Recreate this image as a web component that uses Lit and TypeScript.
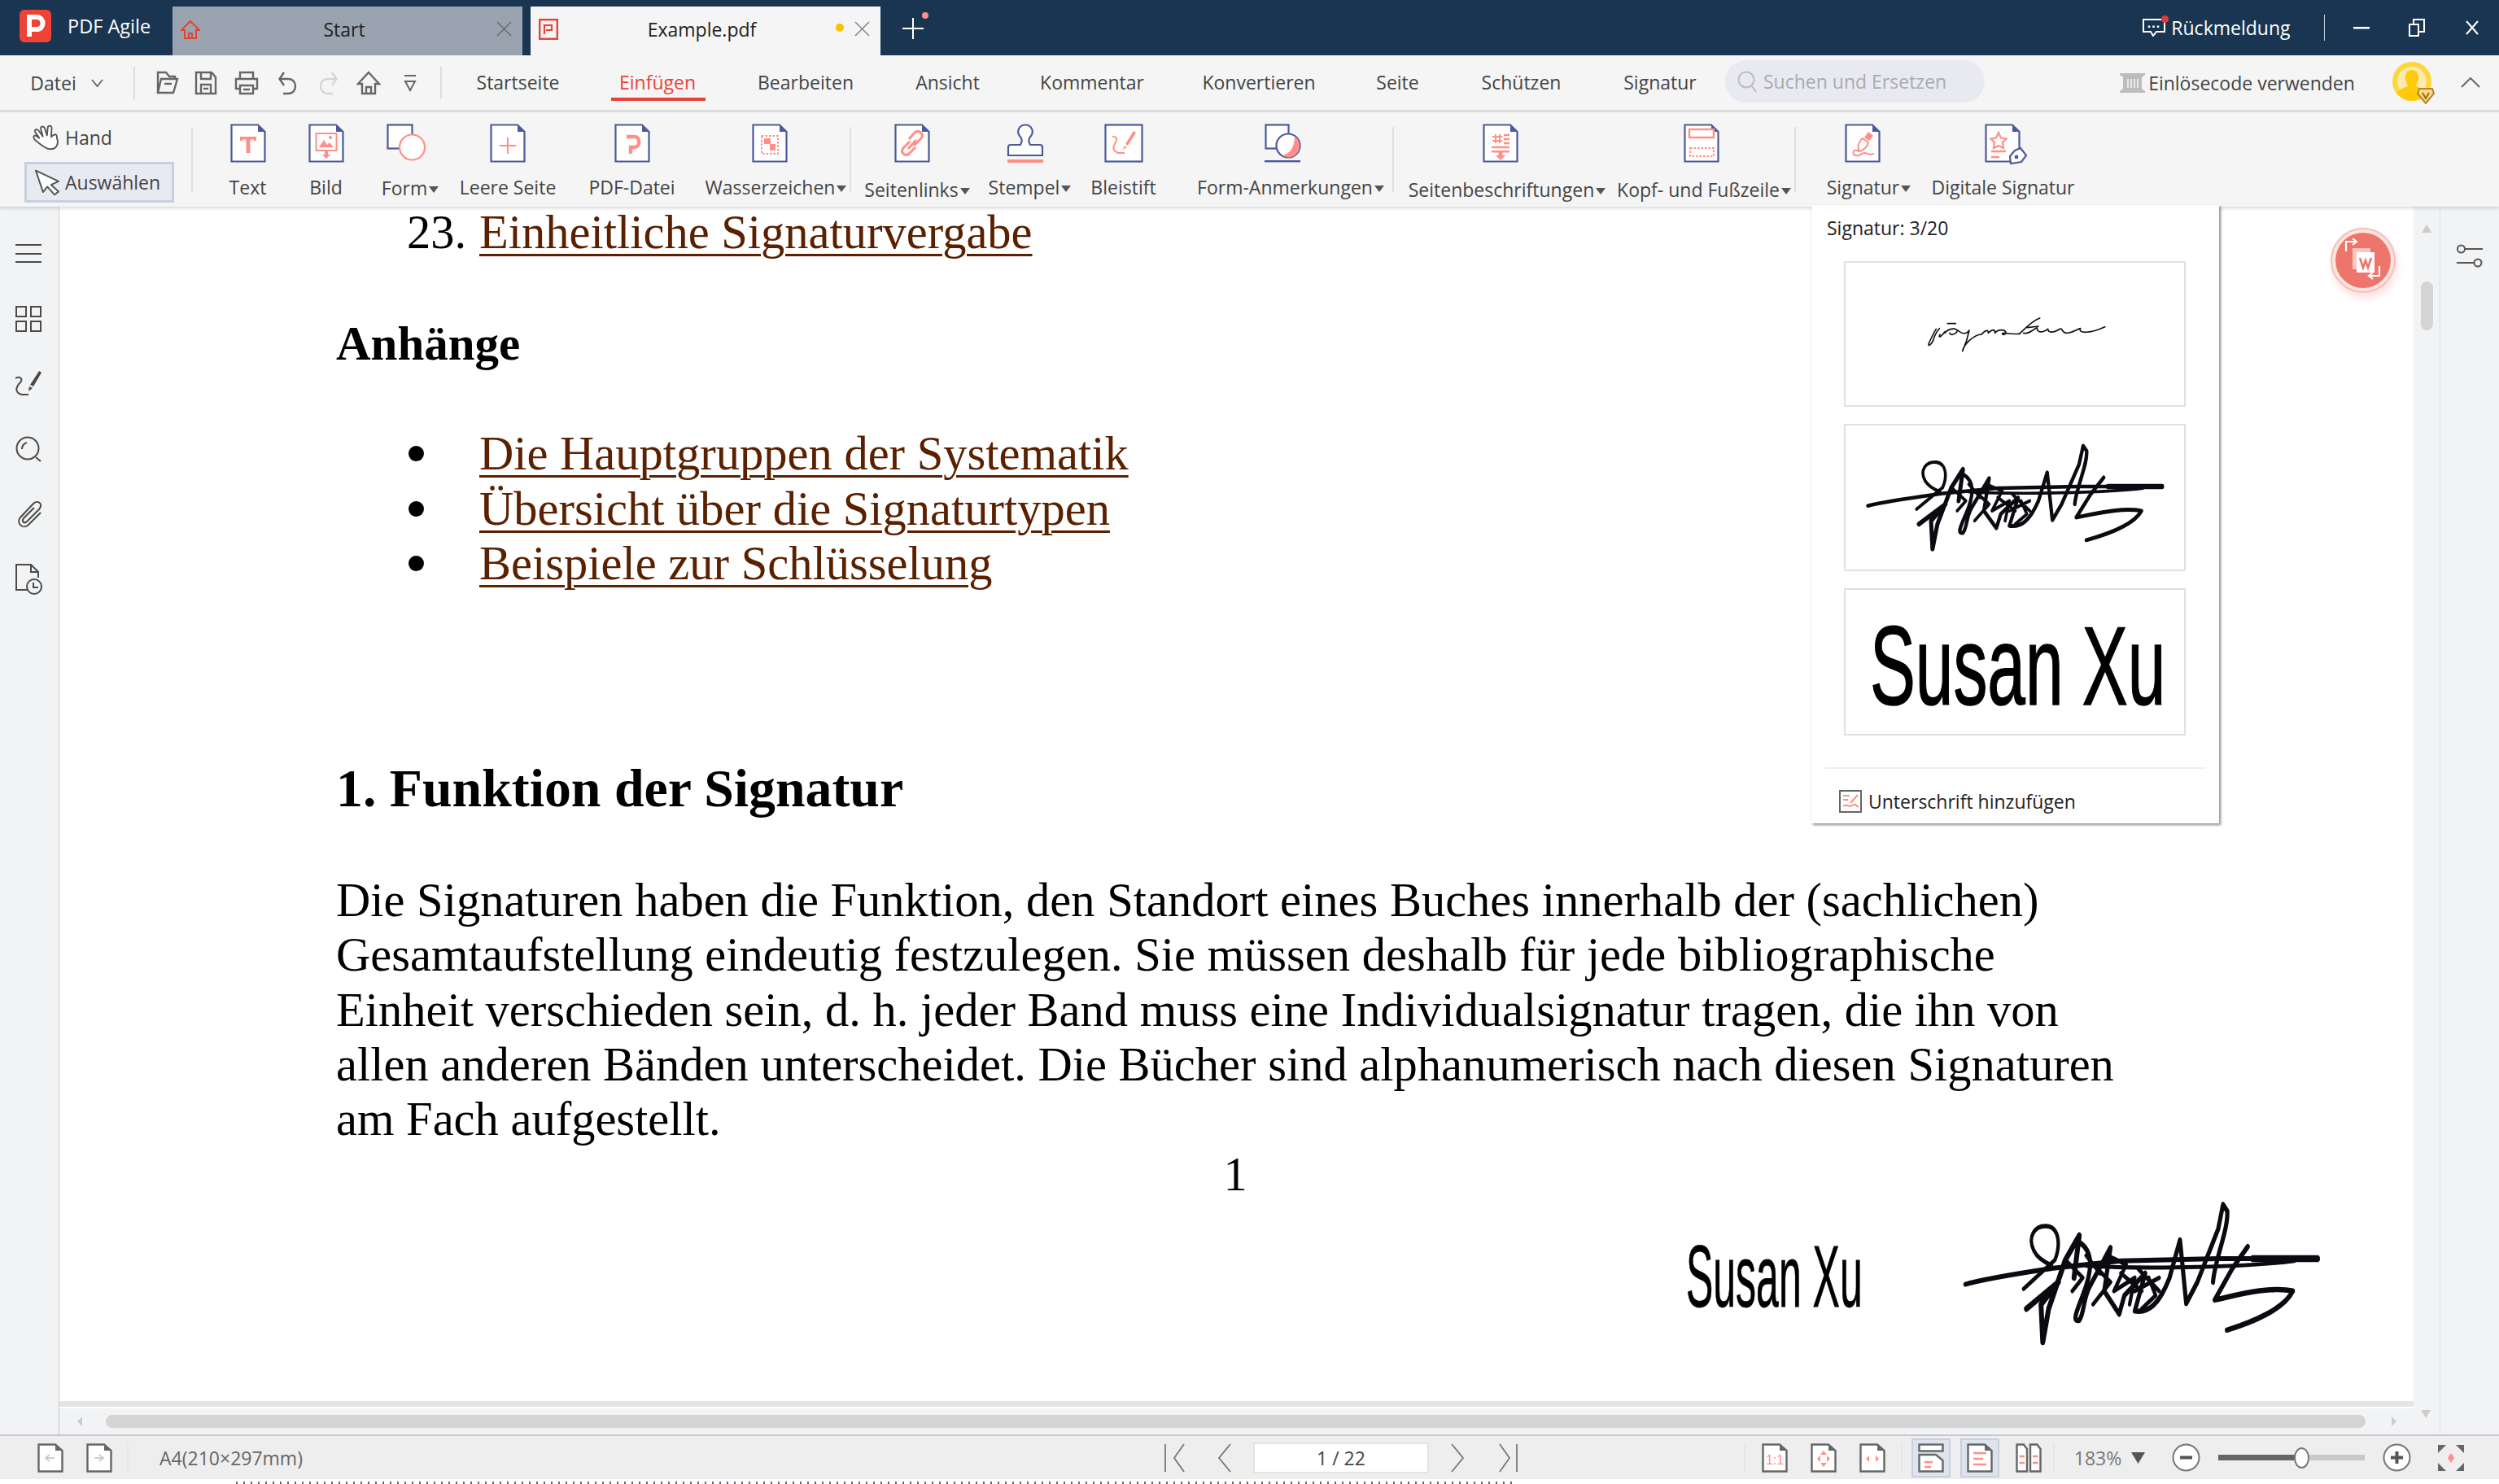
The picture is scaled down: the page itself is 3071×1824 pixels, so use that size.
import { LitElement, html, css, svg } from "lit";
import { customElement } from "lit/decorators.js";

const NAVY = "#4b5a9b";
const SAL = "#ff8f87";
const GR = "#666";

const page = (inner: unknown, w = 44, h = 48) => html`<svg width=${w} height=${h} viewBox="0 0 44 48">
  <path d="M1.5 1.5H34L42.5 10V46.5H1.5Z" fill="#fff" stroke=${NAVY} stroke-width="2.2"/>
  <path d="M34 1.5L42.5 10H34Z" fill=${NAVY}/>${inner}</svg>`;

const rib: Record<string, unknown> = {
  text: page(svg`<path d="M12 16H32V21H29V19.5H24.5V36H19.5V19.5H15V21H12Z" fill=${SAL}/>`),
  bild: page(svg`<rect x="9.5" y="12" width="25" height="21" fill="none" stroke=${SAL} stroke-width="2"/>
    <path d="M13 29L19 20L23 26L26 23L31 29Z" fill=${SAL}/><circle cx="27" cy="17" r="2" fill=${SAL}/>
    <path d="M20 34H24V38H27L22 43L17 38H20Z" fill=${SAL}/>`),
  form: html`<svg width="48" height="48" viewBox="0 0 48 48"><rect x="1.5" y="1.5" width="30" height="29" fill="#fff" stroke=${NAVY} stroke-width="2.2"/>
    <circle cx="31.5" cy="29" r="15.5" fill="#fff" stroke=${SAL} stroke-width="2.2"/></svg>`,
  leere: page(svg`<path d="M22 17V37M12 27H32" stroke=${SAL} stroke-width="2" fill="none"/>`),
  pdf: page(svg`<path d="M15 16H25C32 16 32 29 25 29H20V37" fill="none" stroke=${SAL} stroke-width="4.4"/>`),
  wasser: page(svg`<rect x="12" y="15" width="20" height="22" fill="none" stroke=${SAL} stroke-width="2" stroke-dasharray="2.5 2"/>
    <rect x="15" y="18" width="8" height="7" fill=${SAL}/><rect x="22" y="25" width="7" height="8" fill=${SAL}/>`),
  links: page(svg`<g fill="none" stroke=${SAL} stroke-width="3"><path d="M19 22L11 30C7 35 13 41 18 37L26 29"/><path d="M17 31L27 20"/><path d="M24 27L33 18C37 12 30 7 25 11L18 19"/></g>`),
  stempel: html`<svg width="46" height="48" viewBox="0 0 46 48"><path d="M23 1.5C15 1.5 12 10 16 15C20 19 19 22 17 26H5C3 26 2 27 2 29V39H44V29C44 27 43 26 41 26H29C27 22 26 19 30 15C34 10 31 1.5 23 1.5Z" fill="#fff" stroke=${NAVY} stroke-width="2.2"/><rect x="1" y="44" width="44" height="4" fill=${SAL}/></svg>`,
  stift: html`<svg width="48" height="48" viewBox="0 0 48 48"><rect x="1.5" y="1.5" width="45" height="45" fill="#fff" stroke=${NAVY} stroke-width="2.2"/>
    <path d="M10 16C13 15 17 17 14 23C10 29 10 33 17 36H25" fill="none" stroke=${SAL} stroke-width="2"/>
    <path d="M36 9L39 11L29 27L26 25Z M25 27L28 29L23 32Z" fill=${SAL}/></svg>`,
  anm: html`<svg width="45" height="48" viewBox="0 0 45 48"><rect x="1.5" y="1.5" width="28" height="29" fill="#fff" stroke=${NAVY} stroke-width="2.2"/>
    <circle cx="29" cy="27" r="14.5" fill="#fff" stroke=${NAVY} stroke-width="2.2"/>
    <path d="M37 15.5A14 14 0 0 1 21 39C31 38 37 29 37 15.5Z" fill=${SAL}/><rect x="0" y="45" width="44" height="2.4" fill=${NAVY}/></svg>`,
  beschr: page(svg`<path d="M16 13V24M21 13V24M12 16H24M12 21H24" stroke=${SAL} stroke-width="2" fill="none"/><path d="M26 14H33M26 19H33M26 24H33M11 29H33" stroke=${SAL} stroke-width="2.4"/><path d="M11 33H33V35.5H24.5V39H28L22 45L16 39H19.5V35.5H11Z" fill=${SAL}/>`),
  kopf: page(svg`<rect x="7" y="7" width="30" height="10" fill="#fff" stroke=${SAL} stroke-width="2.4"/><rect x="8" y="30" width="29" height="10" fill="none" stroke=${SAL} stroke-width="2" stroke-dasharray="2.5 2"/>`),
  sign: page(svg`<path d="M29 10L35 15L30 21L24 17Z" fill=${SAL}/><path d="M22 18L29 23C28 28 24 32 18 34C15 29 17 22 22 18ZM17 34C11 30 8 37 13 39C19 41 20 35 25 36C29 37 30 39 36 37" fill="none" stroke=${SAL} stroke-width="2"/>`),
  digital: html`<svg width="52" height="50" viewBox="0 0 52 50"><path d="M1.5 1.5H34L42.5 10V46.5H1.5Z" fill="#fff" stroke=${NAVY} stroke-width="2.2"/>
    <path d="M34 1.5L42.5 10H34Z" fill=${NAVY}/>
    <path d="M17 11L20 17.5L26.5 18.5L22 23L23 30L17 27L11 30L12 23L7.5 18.5L14 17.5Z" fill="none" stroke=${SAL} stroke-width="2.2"/>
    <path d="M8 34H26M8 41H18" stroke=${SAL} stroke-width="2.4"/>
    <path d="M44 30L51 39L45 47L32 49L31 40L37 33Z" fill="#fff" stroke=${NAVY} stroke-width="2.2"/><circle cx="39" cy="41" r="2.4" fill=${NAVY}/></svg>`,
};

const ribbonItems = [
  { k: "text", l: "Text", a: 282, b: 326 },
  { k: "bild", l: "Bild", a: 378, b: 422 },
  { k: "form", l: "Form", a: 467, b: 540, arrow: 1, low: 1, dx: -5 },
  { k: "leere", l: "Leere Seite", a: 565, b: 682 },
  { k: "pdf", l: "PDF-Datei", a: 722, b: 830 },
  { k: "wasser", l: "Wasserzeichen", a: 868, b: 1038, arrow: 1, dx: -8 },
  { sep: 1, a: 1043, b: 1045 },
  { k: "links", l: "Seitenlinks", a: 1062, b: 1191, arrow: 1, low: 2, dx: -6 },
  { k: "stempel", l: "Stempel", a: 1214, b: 1316, arrow: 1, dx: -6 },
  { k: "stift", l: "Bleistift", a: 1341, b: 1419 },
  { k: "anm", l: "Form-Anmerkungen", a: 1466, b: 1705, arrow: 1, dx: -10 },
  { sep: 1, a: 1710, b: 1712 },
  { k: "beschr", l: "Seitenbeschriftungen", a: 1730, b: 1973, arrow: 1, low: 2, dx: -8 },
  { k: "kopf", l: "Kopf- und Fußzeile", a: 1988, b: 2199, arrow: 1, low: 2, dx: -3 },
  { sep: 1, a: 2204, b: 2206 },
  { k: "sign", l: "Signatur", a: 2244, b: 2348, arrow: 1, dx: -8 },
  { k: "digital", l: "Digitale Signatur", a: 2372, b: 2550, dx: 3 },
];

const stroke = (d: unknown, w = 30, h = 30, vb = "0 0 30 30", sw = 2.4, col = GR) => html`<svg width=${w} height=${h} viewBox=${vb} fill="none" stroke=${col} stroke-width=${sw}>${d}</svg>`;

const menuIcons = [
  { a: 189, b: 220, i: stroke(svg`<path d="M5 27H24L29 10H9L5 27ZM5 27V2H15L19 7H26V10M13 16H22"/>`, 31, 30, "0 0 31 30") },
  { a: 239, b: 267, i: stroke(svg`<path d="M2 2H21L26 8V28H2ZM8 2V10H20V2M8 28V17H20V28M11 22H17"/>`, 28, 30, "0 0 28 30") },
  { a: 288, b: 318, i: stroke(svg`<path d="M7 10V2H23V10M7 22H2V10H28V22H23M7 18H23V28H7ZM11 23H19"/>`, 30, 30) },
  { a: 342, b: 365, i: stroke(svg`<path d="M2 10H12C24 10 24 28 12 28H6M7 2L1.5 10L7 18"/>`, 23, 30, "0 0 23 30") },
  { a: 391, b: 415, i: stroke(svg`<path d="M22 10H12C0 10 0 28 12 28H18M17 2L22.5 10L17 18"/>`, 24, 30, "0 0 24 30", 2.4, "#d5d5d5") },
  { a: 438, b: 468, i: stroke(svg`<path d="M15 2L28 16H23V28H7V16H2ZM12 28V20H18V28"/>`, 30, 30) },
  { a: 496, b: 512, i: stroke(svg`<path d="M1 2H15M2 9L8 20L14 9Z"/>`, 16, 22, "0 0 16 22", 2) },
];

const sideIcons = [
  html`<svg width="34" height="40" viewBox="0 0 34 40" stroke="#4a4a4a" stroke-width="2"><path d="M1 9H33M1 20H33M1 30H33"/></svg>`,
  html`<svg width="34" height="40" viewBox="0 0 34 40" fill="none" stroke="#4a4a4a" stroke-width="2"><rect x="2" y="5" width="12" height="12"/><rect x="20" y="5" width="12" height="12"/><rect x="2" y="23" width="12" height="12"/><rect x="20" y="23" width="12" height="12"/></svg>`,
  html`<svg width="36" height="40" viewBox="0 0 36 40" fill="none" stroke="#4a4a4a" stroke-width="2"><path d="M2 13C7 10 12 13 8 18C2 24 1 31 10 33H18"/><path d="M31 4L34 6L24 23L20 21Z M19 23L23 25L18 29Z" fill="#4a4a4a" stroke="none"/></svg>`,
  html`<svg width="34" height="40" viewBox="0 0 34 40" fill="none" stroke="#4a4a4a" stroke-width="2"><circle cx="16" cy="19" r="13.5"/><path d="M26 30L32 35M9 20C9 15 12 13 15 12"/></svg>`,
  html`<svg width="34" height="40" viewBox="0 0 34 40" fill="none" stroke="#4a4a4a" stroke-width="2"><path d="M32 18L17 33C11 39 1 32 7 24L23 7C28 2 36 7 30 14L15 29C12 32 8 29 11 25L24 12"/></svg>`,
  html`<svg width="36" height="40" viewBox="0 0 36 40" fill="none" stroke="#4a4a4a" stroke-width="2"><path d="M18 33H3V2H21L30 11V18M21 2V11H30"/><circle cx="25" cy="29" r="9" fill="#f2f3f5"/><path d="M24 24V30H30"/></svg>`,
];

const sdoc = (inner: unknown) => html`<svg width="32" height="36" viewBox="0 0 32 36"><path d="M1.5 1.5H22L30.5 9V34.5H1.5Z" fill="#fff" stroke=${GR} stroke-width="2.4"/><path d="M22 1.5L30.5 9H22Z" fill=${GR}/>${inner}</svg>`;

const scribble = svg`
  <g fill="none" stroke="#0a0a10" stroke-linecap="round" stroke-linejoin="round">
    <path stroke-width="11" d="M272 545C340 530 430 520 530 508L720 492L1000 487L1285 487"/>
    <path stroke-width="16" d="M1100 487L1285 487"/>
    <path stroke-width="9" d="M1220 492C1100 505 800 512 620 503"/>
    <path stroke-width="10" d="M440 555L530 490C545 460 545 420 510 414C470 410 450 440 470 470C480 485 500 495 520 502"/>
    <path stroke-width="14" d="M448 600L540 540L490 590L495 675L512 600L560 490L600 435L585 530"/>
    <path stroke-width="12" d="M600 450C640 470 640 510 610 570C590 610 580 630 600 626C615 610 610 580 630 550L690 462L672 560L715 612L730 570L790 520L760 605C800 610 830 590 860 530L890 445L908 588L940 540L1000 420L1014 365L1026 380C1030 420 990 490 985 540"/>
    <path stroke-width="12" d="M1085 460L1040 510L990 580C1050 570 1150 548 1215 560C1190 600 1100 630 1025 648"/>
    <path stroke-width="10" d="M680 480L735 500L700 560L760 530L745 590M640 500L690 540L640 590M760 560L830 530M800 530L820 570L780 600M560 490L610 530L580 560M620 480L660 520M720 520L780 560M770 510L830 560"/>
  </g>`;

const cursive = svg`
  <g fill="none" stroke="#111" stroke-linecap="round" stroke-linejoin="round" stroke-width="5">
    <path d="M118 130C105 150 95 175 90 185C88 195 100 190 108 170C112 150 120 140 130 128"/>
    <path d="M132 150C125 165 135 160 150 140M160 110H190"/>
    <path d="M150 145C165 125 200 125 195 140C190 150 170 155 168 145M198 135C215 150 230 150 240 135C235 160 225 190 215 212C220 185 260 150 285 150"/>
    <path d="M285 150C300 135 310 130 310 145C325 130 335 130 335 145C345 130 375 130 375 145C370 155 355 150 365 145C375 145 395 150 425 148"/>
    <path d="M425 148C440 135 470 100 500 90M455 125L495 120"/>
    <path d="M440 145C460 150 470 135 490 125C490 145 510 145 530 130C530 145 550 145 575 130C585 125 580 145 600 145C620 145 640 130 650 128C640 145 680 150 740 122"/>
  </g>`;

@customElement("app-root")
export class AppRoot extends LitElement {
  static styles = css`
    :host { display: block; position: relative; width: 3071px; height: 1824px; overflow: hidden; background: #fff; font-family: "Open Sans", "Liberation Sans", sans-serif; font-size: 23px; color: #444; }
    * { box-sizing: border-box; }
    svg { display: block; flex: none; }

    .title { height: 68px; background: #1a3552; display: flex; align-items: flex-end; color: #fff; }
    .brand { width: 212px; height: 68px; display: flex; align-items: center; padding: 0 0 4px 24px; gap: 20px; font-size: 23.5px; }
    .tab { height: 60px; width: 430px; display: flex; align-items: center; padding: 0 13px 5px 10px; color: #222; position: relative; }
    .tab.start { background: #9aa4b0; }
    .tab.doc { background: #f5f5f5; margin-left: 10px; }
    .tab .name { flex: 1; text-align: center; }
    .tab.start .name { padding-right: 10px; }
    .tab.doc .name { padding-left: 12px; }
    .dot { width: 10px; height: 10px; border-radius: 50%; background: #f7c300; margin: -4px 13px 0 0; }
    .plus { margin: 0 0 20px 27px; position: relative; }
    .plus i { position: absolute; left: 24px; top: -7px; width: 8px; height: 8px; border-radius: 50%; background: #ff8f87; }
    .wctl { margin-left: auto; height: 68px; display: flex; align-items: center; padding-right: 25px; }
    .fb { position: relative; margin-right: 7px; }
    .fb i { position: absolute; right: -4px; top: -4px; width: 9px; height: 9px; border-radius: 50%; background: #e53935; }
    .vsep { width: 1.5px; height: 32px; background: #c9d2dc; margin: 0 35px 0 41px; }

    .menu { height: 70px; background: #f5f5f5; border-bottom: 3px solid #ddd; display: flex; align-items: center; color: #444; }
    .mi { display: flex; justify-content: center; align-items: center; white-space: nowrap; flex: none; }
    .mi.tabn { position: relative; height: 40px; margin-top: -2px; }
    .mi.on { color: #e8433a; }
    .mi.on::after { content: ""; position: absolute; left: -10px; right: -12px; bottom: -3px; height: 4px; background: #e8433a; }
    .msep { height: 40px; width: 1.5px; background: #ddd; flex: none; }
    .search { height: 52px; background: #e9eaf1; border-radius: 26px; display: flex; align-items: center; padding-left: 15px; gap: 8px; color: #aaa; justify-content: flex-start; margin-top: -4px; }
    .avw { position: relative; flex: none; }

    .ribbon { height: 116px; background: #f5f5f5; display: flex; align-items: flex-start; box-shadow: 0 2px 4px rgba(0,0,0,.16); position: relative; z-index: 1; }
    .modes { width: 184px; margin-left: 30px; flex: none; }
    .mode { display: flex; align-items: center; height: 50px; }
    .mode.hand { height: 58px; padding: 4px 0 0 10px; gap: 7px; }
    .mode.sel { background: #e8eaf2; border: 3px solid #c8cfe0; margin-top: 3px; padding-left: 9px; gap: 6px; }
    .rsep { width: 1.5px; height: 80px; background: #e0e0e0; margin-top: 18px; flex: none; }
    .item { display: flex; flex-direction: column; align-items: center; padding-top: 14px; flex: none; white-space: nowrap; }
    .ico { height: 48px; display: flex; align-items: flex-start; }
    .lbl { height: 30px; line-height: 30px; margin-top: 15px; display: flex; align-items: center; gap: 2px; }
    .low1 .lbl { margin-top: 16px; }
    .low2 .lbl { margin-top: 18px; }
    .tri { width: 0; height: 0; border-left: 6px solid transparent; border-right: 6px solid transparent; border-top: 8px solid #555; margin-top: 3px; }

    .body { height: 1509px; display: flex; }
    .side { width: 73px; flex: none; background: #f2f3f5; border-right: 1.5px solid #c9c9c9; display: flex; flex-direction: column; align-items: center; gap: 40px; padding: 38px 0 0 0; }
    .side svg { margin-left: -2px; }
    .col { flex: 1; min-width: 0; display: flex; flex-direction: column; }
    .pagewrap { flex: 1; min-height: 0; overflow: hidden; background: #fff; }
    .pg { padding-left: 340px; font-family: "Liberation Serif", serif; font-size: 58.5px; line-height: 67.25px; color: #000; margin-top: -2px; }
    a { color: #5a2000; text-decoration: underline; text-decoration-thickness: 3px; text-underline-offset: 7px; }
    .li { display: flex; margin-left: 87px; white-space: nowrap; }
    .num { width: 89px; flex: none; }
    .bul { width: 89px; flex: none; display: flex; align-items: center; padding-left: 2px; }
    .bul i { width: 19px; height: 19px; border-radius: 50%; background: #000; }
    h2 { margin: 0; font-size: 59px; font-weight: 700; line-height: 75px; white-space: nowrap; }
    h2.a { margin-top: 66px; }
    h2.big { font-size: 65.8px; line-height: 80px; margin-top: 203px; }
    .list { margin-top: 64px; }
    p { margin: 64px 0 0; white-space: nowrap; }
    .pn { width: 2210px; text-align: center; margin-top: 1px; }
    .sigrow { display: flex; align-items: center; height: 180px; margin-top: -3px; padding-left: 1659px; }
    .sus { font-family: "Liberation Sans", sans-serif; color: #000; white-space: nowrap; transform-origin: left center; display: block; -webkit-text-stroke: 1.5px #000; }
    .sus.pgs { font-size: 107px; line-height: 120px; width: 338px; transform: scaleX(.467); flex: none; -webkit-text-stroke: .8px #000; margin-top: 8px; }
    .hs { height: 34px; background: #f2f3f5; flex: none; position: relative; border-top: 2px solid #fff; box-shadow: 0 -7px 0 #e4e4e4; margin-top: 7px; }
    .hth { position: absolute; left: 57px; right: 59px; top: 8px; height: 16px; background: #d4d4d4; border-radius: 8px; }
    .arrl { position: absolute; left: 22px; top: 10px; width: 0; height: 0; border-top: 6px solid transparent; border-bottom: 6px solid transparent; border-right: 6px solid #ccc; }
    .arrr { position: absolute; right: 21px; top: 10px; width: 0; height: 0; border-top: 6px solid transparent; border-bottom: 6px solid transparent; border-left: 6px solid #ccc; }
    .vs { width: 33px; flex: none; background: #f2f3f5; position: relative; border-right: 1.5px solid #dcdcdc; display: flex; flex-direction: column; align-items: center; padding-top: 22px; }
    .up { width: 0; height: 0; border-left: 6px solid transparent; border-right: 6px solid transparent; border-bottom: 10px solid #ccc; }
    .down { width: 0; height: 0; border-left: 6px solid transparent; border-right: 6px solid transparent; border-top: 10px solid #ccc; position: absolute; bottom: 20px; left: 9px; }
    .vth { width: 15px; height: 60px; border-radius: 8px; background: #d4d4d4; margin-top: 60px; }
    .rail { width: 72px; flex: none; background: #f2f3f5; display: flex; justify-content: center; padding-top: 46px; }

    .status { height: 55px; background: #eee; border-top: 2px solid #c9cad0; display: flex; align-items: center; flex: none; }
    .st { flex: none; display: flex; justify-content: center; align-items: center; white-space: nowrap; }
    .ssep { width: 1.5px; height: 36px; background: #e6e6e6; flex: none; }
    .inp { height: 38px; background: #fff; border: 2px solid #e4e4e4; color: #444; }
    .act { height: 48px; background: #dfe4ec; border: 2px solid #c8cfdf; }
    .a4 { color: #666; }
    .zoomt { color: #777; }
    .slider { height: 26px; position: relative; }
    .slider b { position: absolute; left: 0; top: 9px; height: 7px; width: 100px; background: #666; }
    .slider s { position: absolute; left: 100px; right: 0; top: 9px; height: 7px; background: #c8c8c8; }
    .slider i { position: absolute; left: 93px; top: 0; width: 19px; height: 26px; border-radius: 50%; background: #fff; border: 2px solid #777; }
    .dots { height: 6px; padding: 3px 0 0 290px; }
    .dots i { display: block; width: 1570px; height: 3px; background: repeating-linear-gradient(90deg, #667 0 2px, transparent 2px 9px); }

    .pop { position: absolute; left: 2226px; top: 252px; width: 501px; height: 760px; background: #fff; box-shadow: 2px 2px 3px rgba(0,0,0,.45), -1px 0 2px rgba(0,0,0,.05); z-index: 3; display: flex; flex-direction: column; color: #222; }
    .pop .hd { height: 69px; line-height: 56px; padding-left: 19px; }
    .sb { margin-left: 40px; width: 420px; height: 181px; border: 2.5px solid #e0e0e0; margin-bottom: 21px; display: flex; align-items: center; justify-content: center; overflow: hidden; flex: none; }
    .sb.sm { height: 179px; }
    .sb .sus { font-size: 138px; line-height: 150px; transform: scaleX(.607); width: 363px; margin-top: 8px; }
    .sb.big { justify-content: flex-start; padding-left: 30px; }
    .cur { margin: -10px 0 0 8px; }
    .divi { margin: 18px 16px 0; height: 2px; background: #f0f0f0; flex: none; }
    .ft { display: flex; align-items: center; gap: 8px; padding-left: 34px; margin-top: 24px; color: #222; }

    .fab { position: absolute; left: 2864px; top: 280px; width: 80px; height: 80px; border-radius: 50%; background: #fde4e0; border: 2px solid #f9bdb5; display: flex; align-items: center; justify-content: center; z-index: 2; box-shadow: 2px 6px 10px rgba(240,120,110,.22); }
    .fab div { width: 68px; height: 68px; border-radius: 50%; background: #ee756b; display: flex; align-items: center; justify-content: center; }
  `;

  seq(list: any[], render: (x: any, s: string) => unknown) {
    let prev = 0;
    return list.map((x) => {
      const s = `width:${x.b - x.a}px;margin-left:${x.a - prev}px`;
      prev = x.b;
      return render(x, s);
    });
  }

  renderTitle() {
    return html`<div class="title">
      <div class="brand">
        <svg width="39" height="40" viewBox="0 0 39 40"><rect width="39" height="40" rx="6" fill="#ee4335"/><path d="M12 33V9H21C31 9 31 24 21 24H15" fill="none" stroke="#fff" stroke-width="6"/></svg>
        <span>PDF Agile</span>
      </div>
      <div class="tab start">
        <svg width="24" height="24" viewBox="0 0 24 24" fill="none" stroke="#e0462f" stroke-width="2"><path d="M12 2L23 13H19V23H5V13H1ZM10 23V17H14V23"/></svg>
        <span class="name">Start</span>
        <svg width="19" height="19" viewBox="0 0 19 19" stroke="#6b6b6b" stroke-width="1.6"><path d="M1 1L18 18M18 1L1 18"/></svg>
      </div>
      <div class="tab doc">
        <svg width="24" height="26" viewBox="0 0 24 26" fill="none" stroke="#e8433a"><rect x="1.2" y="1.2" width="21.6" height="23.6" stroke-width="2.4"/><path d="M7 19V8H16V14H9" stroke-width="2.2"/></svg>
        <span class="name">Example.pdf</span>
        <span class="dot"></span>
        <svg width="19" height="19" viewBox="0 0 19 19" stroke="#888" stroke-width="1.6"><path d="M1 1L18 18M18 1L1 18"/></svg>
      </div>
      <div class="plus">
        <svg width="26" height="26" viewBox="0 0 26 26" stroke="#fff" stroke-width="2"><path d="M13 0V26M0 13H26"/></svg><i></i>
      </div>
      <div class="wctl">
        <div class="fb">
          <svg width="28" height="22" viewBox="0 0 28 22" fill="none" stroke="#fff" stroke-width="2"><path d="M1 1H27V16H17L13 21L10 16H1Z"/><path d="M8 8.5V11M13.5 8.5V11M19 8.5V11" stroke-width="2.6"/></svg><i></i>
        </div>
        <span>Rückmeldung</span>
        <span class="vsep"></span>
        <svg width="20" height="4" viewBox="0 0 20 4"><rect y="1" width="20" height="2.5" fill="#fff"/></svg>
        <svg style="margin-left:48px" width="20" height="22" viewBox="0 0 20 22" fill="none" stroke="#fff" stroke-width="2"><rect x="1" y="7" width="11" height="14"/><path d="M6 7V1H19V16H12"/></svg>
        <svg style="margin-left:50px" width="16" height="18" viewBox="0 0 16 18" stroke="#fff" stroke-width="2"><path d="M1 1L15 17M15 1L1 17"/></svg>
      </div>
    </div>`;
  }

  renderMenu() {
    const tabs = [
      { l: "Startseite", a: 587, b: 686 },
      { l: "Einfügen", a: 761, b: 855, on: 1 },
      { l: "Bearbeiten", a: 932, b: 1048 },
      { l: "Ansicht", a: 1126, b: 1203 },
      { l: "Kommentar", a: 1280, b: 1404 },
      { l: "Konvertieren", a: 1480, b: 1614 },
      { l: "Seite", a: 1691, b: 1744 },
      { l: "Schützen", a: 1821, b: 1918 },
      { l: "Signatur", a: 1995, b: 2085 },
    ];
    const list: any[] = [
      { a: 38, b: 93, c: html`Datei` },
      { a: 112, b: 127, c: stroke(svg`<path d="M1 2L7.5 10L14 2"/>`, 15, 12, "0 0 15 12", 1.8) },
      { a: 164, b: 166, sep: 1 },
      ...menuIcons.map((m) => ({ a: m.a, b: m.b, c: m.i })),
      { a: 541, b: 543, sep: 1 },
      ...tabs.map((t) => ({ a: t.a, b: t.b, c: html`${t.l}`, cls: t.on ? "tabn on" : "tabn" })),
      { a: 2120, b: 2439, search: 1 },
      { a: 2605, b: 2636, c: html`<svg width="31" height="24" viewBox="0 0 31 24"><path d="M0 0H31V2L27 5V19L31 22V24H0V22L4 19V5L0 2Z" fill="#bdbdbd"/><path d="M10 7V18M14 7V18M18 7V18M22 7V18" stroke="#f5f5f5" stroke-width="1.6"/></svg>` },
      { a: 2642, b: 2892, c: html`Einlösecode verwenden` },
      { a: 2940, b: 2988, avatar: 1 },
      { a: 3024, b: 3048, c: stroke(svg`<path d="M1 12L12 1L23 12"/>`, 24, 13, "0 0 24 13", 2) },
    ];
    return html`<div class="menu">
      ${this.seq(list, (x, s) =>
        x.sep ? html`<span class="msep" style=${s}></span>`
        : x.search ? html`<div class="search" style=${s}>
            <svg width="24" height="28" viewBox="0 0 24 28" fill="none" stroke="#bbb" stroke-width="2"><circle cx="11" cy="12" r="9.5"/><path d="M18 20L23 27"/></svg><span>Suchen und Ersetzen</span></div>`
        : x.avatar ? html`<div class="avw" style=${s}>
            <svg width="52" height="52" viewBox="0 0 52 52"><circle cx="24" cy="24" r="24" fill="#ffd53d"/><circle cx="24" cy="24" r="18" fill="#fdeab0"/><path d="M24 10C30 10 33 15 32 21C31 26 29 28 29 30C34 32 40 34 43 38C38 45 31 48 24 48C17 48 10 45 5 38C8 34 14 32 19 30C19 28 17 26 16 21C15 15 18 10 24 10Z" fill="#ffca0a"/><path d="M33 33H49L51 39L41 51L31 39Z" fill="#f7d98a" stroke="#b98324" stroke-width="2"/><path d="M37 38L41 45L45 38" fill="none" stroke="#9a6a14" stroke-width="2"/></svg></div>`
        : html`<span class="mi ${x.cls || ""}" style=${s}>${x.c}</span>`
      )}
    </div>`;
  }

  renderRibbon() {
    let prev = 236;
    const hand = html`<svg width="33" height="32" viewBox="56 32 104 96" fill="#fff" stroke="#555" stroke-width="6" stroke-linejoin="round"><path d="M72 95C58 85 56 72 68 72L82 82L66 58C62 48 74 46 80 54L96 76L88 48C86 36 98 34 103 44L112 72L115 42C116 32 130 32 130 44L128 78L138 70C148 64 152 74 150 82C158 100 152 125 125 125C105 125 90 108 72 95Z"/></svg>`;
    const arrow = html`<svg width="32" height="33" viewBox="60 200 95 100" fill="#fff" stroke="#555" stroke-width="6" stroke-linejoin="round"><path d="M65 205L150 245L122 258L150 283L135 295L108 265L92 285Z"/></svg>`;
    return html`<div class="ribbon">
      <div class="modes">
        <div class="mode hand">${hand}<span>Hand</span></div>
        <div class="mode sel">${arrow}<span>Auswählen</span></div>
      </div>
      <span class="rsep" style="margin-left:21px"></span>
      ${ribbonItems.map((it: any) => {
        const s = `width:${it.b - it.a}px;margin-left:${it.a - prev}px`;
        prev = it.b;
        if (it.sep) return html`<span class="rsep" style=${s}></span>`;
        return html`<div class="item ${it.low ? "low" + it.low : ""}" style=${s}>
          <div class="ico" style=${it.dx ? `transform:translateX(${it.dx}px)` : ""}>${rib[it.k]}</div>
          <div class="lbl">${it.l}${it.arrow ? html`<span class="tri"></span>` : ""}</div>
        </div>`;
      })}
    </div>`;
  }

  renderPage() {
    return html`<div class="pagewrap"><div class="pg">
      <div class="li"><span class="num">23.</span><a>Einheitliche Signaturvergabe</a></div>
      <h2 class="a">Anhänge</h2>
      <div class="list">
        <div class="li"><span class="bul"><i></i></span><a>Die Hauptgruppen der Systematik</a></div>
        <div class="li"><span class="bul"><i></i></span><a>Übersicht über die Signaturtypen</a></div>
        <div class="li"><span class="bul"><i></i></span><a>Beispiele zur Schlüsselung</a></div>
      </div>
      <h2 class="big">1. Funktion der Signatur</h2>
      <p>Die Signaturen haben die Funktion, den Standort eines Buches innerhalb der (sachlichen)<br>Gesamtaufstellung eindeutig festzulegen. Sie müssen deshalb für jede bibliographische<br>Einheit verschieden sein, d. h. jeder Band muss eine Individualsignatur tragen, die ihn von<br>allen anderen Bänden unterscheidet. Die Bücher sind alphanumerisch nach diesen Signaturen<br>am Fach aufgestellt.</p>
      <div class="pn">1</div>
      <div class="sigrow">
        <span class="sus pgs">Susan Xu</span>
        <svg width="444" height="180" viewBox="260 355 1040 330" preserveAspectRatio="none">${scribble}</svg>
      </div>
    </div></div>`;
  }

  renderStatus() {
    const vm = [
      { a: 46, b: 78, c: sdoc(svg`<path d="M21 18H11M15 14L10 18L15 22" fill="none" stroke="#ccc" stroke-width="2"/>`) },
      { a: 106, b: 138, c: sdoc(svg`<path d="M10 18H20M16 14L21 18L16 22" fill="none" stroke="#ccc" stroke-width="2"/>`) },
      { a: 156, b: 158, sep: 1 },
      { a: 195, b: 373, c: html`<span class="a4">A4(210×297mm)</span>` },
      { a: 1431, b: 1457, c: stroke(svg`<path d="M1 1V35M24 1L12 18L24 35"/>`, 26, 36, "0 0 26 36", 1.8, "#777") },
      { a: 1495, b: 1514, c: stroke(svg`<path d="M17 1L3 18L17 35"/>`, 19, 36, "0 0 19 36", 1.8, "#777") },
      { a: 1540, b: 1756, c: html`1 / 22`, cls: "inp" },
      { a: 1782, b: 1801, c: stroke(svg`<path d="M2 1L16 18L2 35"/>`, 19, 36, "0 0 19 36", 1.8, "#777") },
      { a: 1841, b: 1865, c: stroke(svg`<path d="M23 1V35M2 1L14 18L2 35"/>`, 24, 36, "0 0 24 36", 1.8, "#777") },
      { a: 2143, b: 2145, sep: 1 },
      { a: 2165, b: 2197, c: sdoc(svg`<text x="16" y="26" text-anchor="middle" font-size="16" font-family="Liberation Sans" fill=${SAL}>1:1</text>`) },
      { a: 2225, b: 2257, c: sdoc(svg`<path d="M16 9L20 14H12ZM16 29L12 24H20ZM8 19L12 15V23ZM24 19L20 15V23Z" fill=${SAL}/>`) },
      { a: 2285, b: 2317, c: sdoc(svg`<path d="M8 19L12 15V23ZM24 19L20 15V23Z" fill=${SAL}/>`) },
      { a: 2336, b: 2338, sep: 1 },
      { a: 2349, b: 2397, cls: "act", c: html`<svg width="32" height="36" viewBox="0 0 32 36"><rect x="1.5" y="1.5" width="29" height="8" fill="#fff" stroke=${GR} stroke-width="2.4"/><path d="M1.5 14H22L30.5 21V34.5H1.5Z" fill="#fff" stroke=${GR} stroke-width="2.4"/><path d="M8 23H18M8 29H16" stroke=${SAL} stroke-width="2.4"/></svg>` },
      { a: 2409, b: 2457, cls: "act", c: sdoc(svg`<path d="M8 12H24M8 19H20M8 26H24" stroke=${SAL} stroke-width="2.4"/>`) },
      { a: 2477, b: 2509, c: html`<svg width="32" height="36" viewBox="0 0 32 36" fill="#fff" stroke=${GR} stroke-width="2.4"><path d="M1.5 1.5H10L14 7V34.5H1.5ZM18 1.5H26.5L30.5 7V34.5H18Z"/><path d="M4.5 16H11M4.5 24H11M21 16H27.5M21 24H27.5" stroke=${SAL}/></svg>` },
      { a: 2523, b: 2525, sep: 1 },
      { a: 2549, b: 2607, c: html`<span class="zoomt">183%</span>` },
      { a: 2619, b: 2636, c: html`<svg width="17" height="14" viewBox="0 0 17 14"><path d="M0 0H17L8.5 14Z" fill="#555"/></svg>` },
      { a: 2669, b: 2704, c: html`<svg width="35" height="35" viewBox="0 0 35 35" fill="#fff" stroke="#777" stroke-width="2"><circle cx="17.5" cy="17.5" r="16"/><path d="M10 17.5H25" stroke="#555" stroke-width="4"/></svg>` },
      { a: 2726, b: 2906, slider: 1 },
      { a: 2928, b: 2963, c: html`<svg width="35" height="35" viewBox="0 0 35 35" fill="#fff" stroke="#777" stroke-width="2"><circle cx="17.5" cy="17.5" r="16"/><path d="M10 17.5H25M17.5 10V25" stroke="#555" stroke-width="4"/></svg>` },
      { a: 2996, b: 3028, c: html`<svg width="32" height="32" viewBox="0 0 32 32"><path d="M0 0H10L0 10ZM32 0H22L32 10ZM0 32H10L0 22ZM32 32H22L32 22Z" fill="#666"/><path d="M16 10L20 16L16 22L12 16Z" fill=${SAL}/></svg>` },
    ];
    return html`<div class="status">
      ${this.seq(vm, (x, s) =>
        x.sep ? html`<span class="ssep" style=${s}></span>`
        : x.slider ? html`<div class="slider st" style=${s}><b></b><s></s><i></i></div>`
        : html`<div class="st ${x.cls || ""}" style=${s}>${x.c}</div>`
      )}
    </div>`;
  }

  renderPopover() {
    return html`<div class="pop">
      <div class="hd">Signatur: 3/20</div>
      <div class="sb sm"><svg class="cur" width="280" height="90" viewBox="0 0 840 270">${cursive}</svg></div>
      <div class="sb"><svg width="371" height="135" viewBox="260 355 1040 330" preserveAspectRatio="none">${scribble}</svg></div>
      <div class="sb big"><span class="sus">Susan Xu</span></div>
      <div class="divi"></div>
      <div class="ft">
        <svg width="28" height="28" viewBox="0 0 28 28" fill="none"><rect x="1" y="1" width="26" height="26" stroke="#666" stroke-width="2"/><path d="M5 7H13M5 12H11M5 20C9 16 12 22 16 19C19 17 20 18 24 21M14 16L23 6" stroke=${SAL} stroke-width="2"/></svg>
        <span>Unterschrift hinzufügen</span>
      </div>
    </div>`;
  }

  render() {
    return html`
      ${this.renderTitle()}
      ${this.renderMenu()}
      ${this.renderRibbon()}
      <div class="body">
        <div class="side">${sideIcons}</div>
        <div class="col">
          ${this.renderPage()}
          <div class="hs"><span class="arrl"></span><span class="hth"></span><span class="arrr"></span></div>
        </div>
        <div class="vs"><span class="up"></span><span class="vth"></span><span class="down"></span></div>
        <div class="rail">
          <svg width="32" height="30" viewBox="0 0 32 30" fill="none" stroke="#555" stroke-width="2"><circle cx="5.5" cy="6" r="4.5"/><path d="M10 6H32M0 23H22"/><circle cx="26" cy="23" r="4.5"/></svg>
        </div>
      </div>
      ${this.renderStatus()}
      <div class="dots"><i></i></div>
      ${this.renderPopover()}
      <div class="fab"><div>
        <svg width="48" height="54" viewBox="0 0 48 54" fill="none"><rect x="11" y="12" width="22" height="26" fill="#f9c7c1"/><rect x="16" y="17" width="22" height="25" fill="#fff"/><path d="M20 24L24 36L27 27L30 36L34 24" stroke="#ee756b" stroke-width="2.6"/><path d="M3 16V4H15M11 0L16 4L11 8M44 34V46H32M36 42L31 46L36 50" stroke="#fff" stroke-width="2.2"/></svg>
      </div></div>
    `;
  }
}
